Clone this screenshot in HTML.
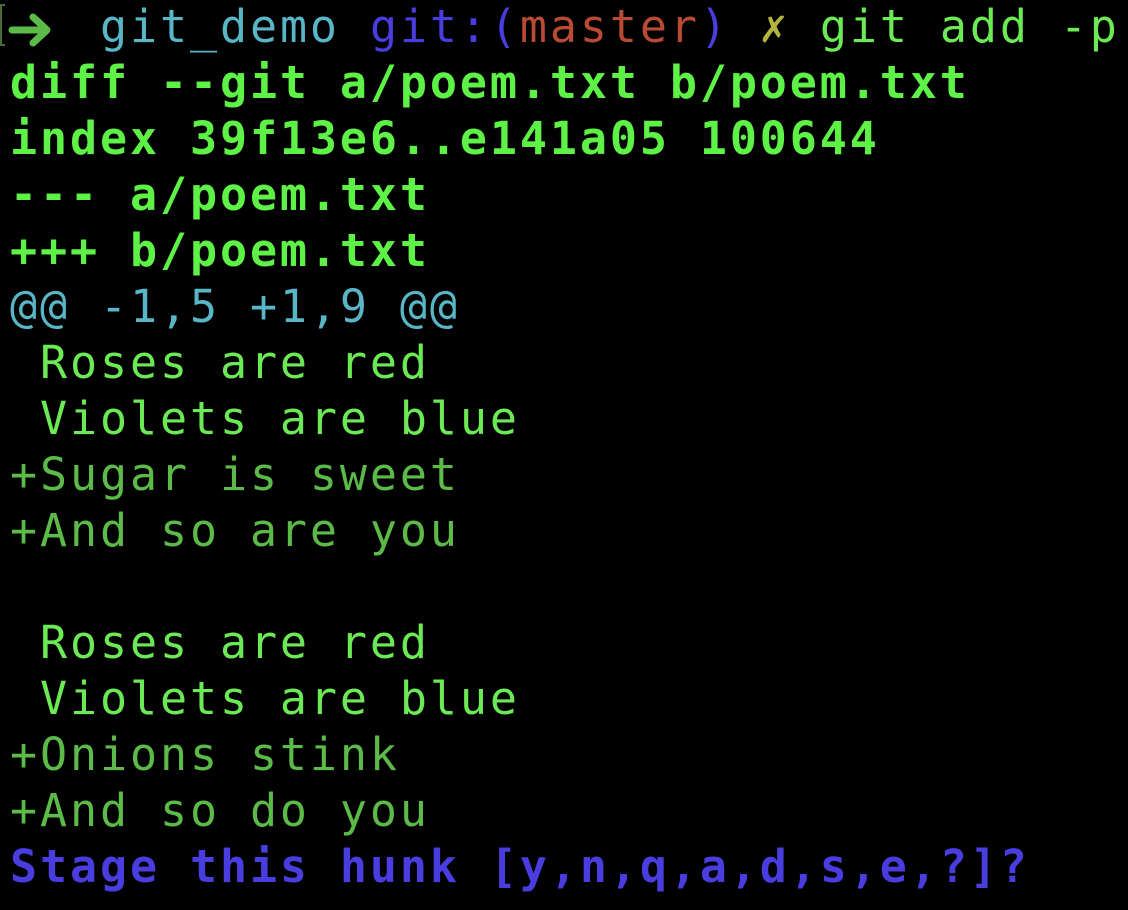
<!DOCTYPE html>
<html><head><meta charset="utf-8"><style>
html,body{margin:0;background:#000;width:1128px;height:910px;overflow:hidden}
pre{margin:0;position:absolute;left:10px;top:-1px;font-family:"DejaVu Sans Mono","Liberation Mono",monospace;font-size:45px;line-height:56px;letter-spacing:2.9px;color:#6cea55}
.b{font-weight:bold;color:#5ef247}
.c{color:#58b6c6}
.u{color:#4a3ddf}
.r{color:#b94a34}
.y{color:#b3b33e}
.a{color:#5cbb48}
.g{color:#6cea55}
.br{position:absolute;left:0;top:4px;width:5px;height:42px;border:2px solid #4a6a3a;border-right:none;box-sizing:border-box}
svg{position:absolute;left:0;top:0}
</style></head><body>
<div class="br"></div>
<svg width="60" height="50"><path d="M12 30 H44 M33 17 L47 30 L33 43" stroke="#5cbb48" stroke-width="7" fill="none" stroke-linecap="round" stroke-linejoin="round"/></svg>
<pre>   <span class="c">git_demo</span> <span class="u">git:(</span><span class="r">master</span><span class="u">)</span> <span class="y">✗</span> <span class="g">git add -p</span>
<span class="b">diff --git a/poem.txt b/poem.txt</span>
<span class="b">index 39f13e6..e141a05 100644</span>
<span class="b">--- a/poem.txt</span>
<span class="b">+++ b/poem.txt</span>
<span class="c">@@ -1,5 +1,9 @@</span>
 Roses are red
 Violets are blue
<span class="a">+Sugar is sweet</span>
<span class="a">+And so are you</span>

 Roses are red
 Violets are blue
<span class="a">+Onions stink</span>
<span class="a">+And so do you</span>
<span class="u" style="font-weight:bold">Stage this hunk [y,n,q,a,d,s,e,?]?</span> </pre>
</body></html>
